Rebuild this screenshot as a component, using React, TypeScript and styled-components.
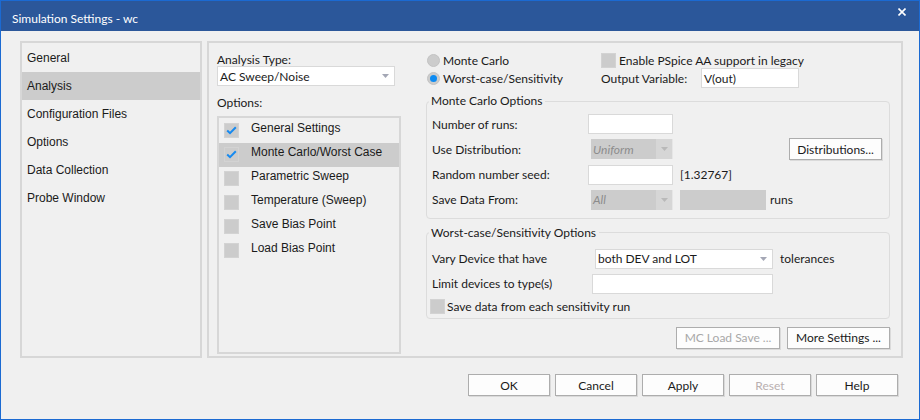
import React from 'react';
import styled, { createGlobalStyle } from 'styled-components';

const UI = `"Lato", "Noto Sans", sans-serif`;
const ARIAL = `"Liberation Sans", Arial, sans-serif`;

const Global = createGlobalStyle`
  html, body { margin: 0; padding: 0; background: #f0f0f0; }
  * { box-sizing: border-box; }
`;

const Window = styled.div`
  width: 920px;
  height: 420px;
  border: 1px solid #1b6ad2;
  background: #f0f0f0;
  display: flex;
  flex-direction: column;
  overflow: hidden;
  font-family: ${UI};
  font-size: 12px;
  color: #1a1a1a;
`;

const TitleBar = styled.div`
  height: 30px;
  flex: none;
  background: #2b579a;
  color: #fff;
  display: flex;
  align-items: flex-start;
  justify-content: space-between;
  padding: 0 13px 0 11px;
`;

const TitleText = styled.div`
  margin-top: 11px;
  line-height: 14px;
  font-size: 12px;
`;

const CloseBtn = styled.div`
  margin-top: 7px;
  width: 8px;
  height: 8px;
  display: flex;
`;

const Body = styled.div`
  flex: 1;
  display: flex;
  flex-direction: column;
  padding: 10px 16px 0 19px;
`;

const Panels = styled.div`
  display: flex;
  gap: 5px;
  height: 317px;
  flex: none;
`;

const Nav = styled.div`
  width: 182px;
  flex: none;
  border: 2px solid #d7d7d7;
  padding-top: 1px;
  display: flex;
  flex-direction: column;
`;

const NavItem = styled.div<{ $active?: boolean }>`
  height: 28px;
  display: flex;
  align-items: center;
  padding-left: 5px;
  font-family: ${ARIAL};
  font-size: 12px;
  color: #1a1a1a;
  background: ${(p) => (p.$active ? '#cccccc' : 'transparent')};
`;

const Main = styled.div`
  flex: 1;
  border: 2px solid #d7d7d7;
  display: flex;
  gap: 25px;
  padding: 9px 11px 2px 8px;
`;

const LeftCol = styled.div`
  width: 184px;
  flex: none;
  display: flex;
  flex-direction: column;
`;

const SmallLabel = styled.div<{ $mt: number }>`
  margin-top: ${(p) => p.$mt}px;
  height: 12px;
  line-height: 12px;
  white-space: nowrap;
`;

const Combo = styled.div<{ $w: number; $ml?: number }>`
  width: ${(p) => p.$w}px;
  margin-left: ${(p) => p.$ml ?? 0}px;
  height: 20px;
  background: #fff;
  border: 1px solid #d9d9d9;
  display: flex;
  align-items: center;
  justify-content: space-between;
  padding: 0 5px 0 2px;
  white-space: nowrap;
`;

const DisabledCombo = styled.div`
  width: 82px;
  margin-left: 3px;
  height: 20px;
  background: #cccccc;
  display: flex;
  align-items: center;
  justify-content: space-between;
  font-style: italic;
  color: #8c8c8c;
  padding-left: 2px;
`;

const DisabledArrowZone = styled.div`
  width: 17px;
  height: 100%;
  display: flex;
  align-items: center;
  justify-content: center;
  background: #d6d6d6;
  border-right: 1px solid #e6e6e6;
`;

const ListBox = styled.div`
  margin-top: 7px;
  flex: 1;
  border: 2px solid #d7d7d7;
  padding-top: 1px;
  display: flex;
  flex-direction: column;
`;

const ListRow = styled.div<{ $active?: boolean }>`
  height: 24px;
  display: flex;
  align-items: flex-start;
  gap: 12px;
  padding: 2px 0 0 5px;
  background: ${(p) => (p.$active ? '#cccccc' : 'transparent')};
  font-family: ${ARIAL};
  font-size: 12px;
  line-height: 14px;
`;

const CheckBox = styled.span<{ $mt?: number; $ml?: number }>`
  width: 15px;
  height: 15px;
  flex: none;
  margin-top: ${(p) => p.$mt ?? 0}px;
  margin-left: ${(p) => p.$ml ?? 0}px;
  background: #cccccc;
  border: 1px solid #d3d3d3;
  display: flex;
  align-items: center;
  justify-content: center;
`;

const RightCol = styled.div`
  flex: 1;
  display: flex;
  flex-direction: column;
`;

const TopGrid = styled.div`
  display: grid;
  grid-template-columns: 175px 1fr;
  grid-template-rows: 16px 20px;
  align-items: center;
`;

const RadioItem = styled.div`
  display: flex;
  align-items: center;
  gap: 3px;
  padding-left: 1px;
  white-space: nowrap;
`;

const Radio = styled.span<{ $checked?: boolean }>`
  width: 13px;
  height: 13px;
  border-radius: 50%;
  background: #cccccc;
  border: 1px solid #c3c3c3;
  display: flex;
  align-items: center;
  justify-content: center;
  &::after {
    content: '';
    width: 7px;
    height: 7px;
    border-radius: 50%;
    background: #0d8bf2;
    display: ${(p) => (p.$checked ? 'block' : 'none')};
  }
`;

const CheckItem = styled.div<{ $gap: number }>`
  display: flex;
  align-items: center;
  gap: ${(p) => p.$gap}px;
  white-space: nowrap;
`;

const OutputRow = styled.div`
  display: flex;
  align-items: center;
  height: 20px;
`;

const OutputLabel = styled.div`
  width: 100px;
`;

const Field = styled.div<{ $w: number; $ml?: number }>`
  width: ${(p) => p.$w}px;
  margin-left: ${(p) => p.$ml ?? 0}px;
  height: 20px;
  background: #fff;
  border: 1px solid #d9d9d9;
  display: flex;
  align-items: center;
  padding-left: 2px;
`;

const GrayField = styled.div`
  width: 86px;
  height: 20px;
  background: #cccccc;
`;

const Group = styled.fieldset<{ $mt: number; $pt: number; $pb: number }>`
  margin: ${(p) => p.$mt}px 0 0 0;
  border: 1px solid #dcdcdc;
  border-radius: 4px;
  padding: ${(p) => p.$pt}px 7px ${(p) => p.$pb}px 5px;
  min-width: 0;
`;

const Legend = styled.legend`
  padding: 0 3px 0 2px;
  margin-left: -3px;
  line-height: 14px;
  font-size: 12px;
`;

const MCGrid = styled.div`
  display: grid;
  grid-template-columns: 156px 85px 1fr;
  grid-auto-rows: 20px;
  row-gap: 5.33px;
  align-items: center;
`;

const WCGrid = styled.div`
  display: grid;
  grid-template-columns: 160px 181px 1fr;
  grid-template-rows: 20px 20px 15px;
  row-gap: 5px;
  align-items: center;
`;

const Extra = styled.div<{ $justify?: string; $gap?: number }>`
  display: flex;
  align-items: center;
  justify-content: ${(p) => p.$justify ?? 'flex-start'};
  gap: ${(p) => p.$gap ?? 4}px;
  padding-left: 7px;
  white-space: nowrap;
`;

const FullRow = styled.div`
  grid-column: 1 / -1;
  display: flex;
  align-items: center;
  gap: 2px;
  white-space: nowrap;
`;

const Btn = styled.button<{ $w: number; $off?: boolean; $dim?: string }>`
  width: ${(p) => p.$w}px;
  height: 22px;
  flex: none;
  background: #fdfdfd;
  border: 1px solid #adadad;
  box-shadow: 1px 1px 0 #dadada;
  font-family: ${UI};
  font-size: 12px;
  color: ${(p) => (p.$off ? p.$dim ?? '#a8a8a8' : '#1a1a1a')};
  padding: 0;
  border-radius: 0;
`;

const RightButtons = styled.div`
  margin-top: 8px;
  display: flex;
  justify-content: flex-end;
  gap: 7px;
`;

const DialogButtons = styled.div`
  margin-top: 16px;
  display: flex;
  justify-content: flex-end;
  gap: 5px;
  padding-right: 5px;
`;

const Arrow = ({ color = '#a4a7b5' }: { color?: string }) => (
  <svg width="7" height="4" viewBox="0 0 7 4">
    <polygon points="0,0 7,0 3.5,4" fill={color} />
  </svg>
);

const Check = () => (
  <svg width="11" height="9" viewBox="0 0 11 9">
    <polyline points="1.2,4.6 4,7.2 9.8,1.2" fill="none" stroke="#168af0" strokeWidth="2" />
  </svg>
);

const navItems = ['General', 'Analysis', 'Configuration Files', 'Options', 'Data Collection', 'Probe Window'];
const options = [
  { label: 'General Settings', checked: true },
  { label: 'Monte Carlo/Worst Case', checked: true, active: true },
  { label: 'Parametric Sweep' },
  { label: 'Temperature (Sweep)' },
  { label: 'Save Bias Point' },
  { label: 'Load Bias Point' },
];

export default function App() {
  return (
    <>
      <Global />
      <Window>
        <TitleBar>
          <TitleText>Simulation Settings - wc</TitleText>
          <CloseBtn>
            <svg width="8" height="8" viewBox="0 0 8 8">
              <path d="M0.5 0.5 L7.5 7.5 M7.5 0.5 L0.5 7.5" stroke="#fff" strokeWidth="1.6" />
            </svg>
          </CloseBtn>
        </TitleBar>
        <Body>
          <Panels>
            <Nav>
              {navItems.map((n) => (
                <NavItem key={n} $active={n === 'Analysis'}>
                  {n}
                </NavItem>
              ))}
            </Nav>
            <Main>
              <LeftCol>
                <SmallLabel $mt={2}>Analysis Type:</SmallLabel>
                <Combo $w={178}>
                  <span>AC Sweep/Noise</span>
                  <Arrow />
                </Combo>
                <SmallLabel $mt={11}>Options:</SmallLabel>
                <ListBox>
                  {options.map((o) => (
                    <ListRow key={o.label} $active={o.active}>
                      <CheckBox $mt={2}>{o.checked && <Check />}</CheckBox>
                      <span>{o.label}</span>
                    </ListRow>
                  ))}
                </ListBox>
              </LeftCol>
              <RightCol>
                <TopGrid>
                  <RadioItem>
                    <Radio />
                    <span>Monte Carlo</span>
                  </RadioItem>
                  <CheckItem $gap={3}>
                    <CheckBox />
                    <span>Enable PSpice AA support in legacy</span>
                  </CheckItem>
                  <RadioItem>
                    <Radio $checked />
                    <span>Worst-case/Sensitivity</span>
                  </RadioItem>
                  <OutputRow>
                    <OutputLabel>Output Variable:</OutputLabel>
                    <Field $w={98}>V(out)</Field>
                  </OutputRow>
                </TopGrid>
                <Group $mt={6} $pt={6} $pb={8}>
                  <Legend>Monte Carlo Options</Legend>
                  <MCGrid>
                    <span>Number of runs:</span>
                    <Field $w={85} />
                    <span />
                    <span>Use Distribution:</span>
                    <DisabledCombo>
                      <span>Uniform</span>
                      <DisabledArrowZone>
                        <Arrow color="#b9b9b9" />
                      </DisabledArrowZone>
                    </DisabledCombo>
                    <Extra $justify="flex-end">
                      <Btn $w={93}>Distributions...</Btn>
                    </Extra>
                    <span>Random number seed:</span>
                    <Field $w={85} />
                    <Extra>[1.32767]</Extra>
                    <span>Save Data From:</span>
                    <DisabledCombo>
                      <span>All</span>
                      <DisabledArrowZone>
                        <Arrow color="#b9b9b9" />
                      </DisabledArrowZone>
                    </DisabledCombo>
                    <Extra $gap={4}>
                      <GrayField />
                      <span>runs</span>
                    </Extra>
                  </MCGrid>
                </Group>
                <Group $mt={7} $pt={9} $pb={4}>
                  <Legend>Worst-case/Sensitivity Options</Legend>
                  <WCGrid>
                    <span>Vary Device that have</span>
                    <Combo $w={178} $ml={3}>
                      <span>both DEV and LOT</span>
                      <Arrow />
                    </Combo>
                    <Extra>tolerances</Extra>
                    <span>Limit devices to type(s)</span>
                    <Field $w={181} />
                    <span />
                    <FullRow>
                      <CheckBox $ml={-2} />
                      <span>Save data from each sensitivity run</span>
                    </FullRow>
                  </WCGrid>
                </Group>
                <RightButtons>
                  <Btn $w={104} $off>
                    MC Load Save ...
                  </Btn>
                  <Btn $w={103}>More Settings ...</Btn>
                </RightButtons>
              </RightCol>
            </Main>
          </Panels>
          <DialogButtons>
            <Btn $w={82}>OK</Btn>
            <Btn $w={82}>Cancel</Btn>
            <Btn $w={82}>Apply</Btn>
            <Btn $w={82} $off $dim="#b9b0b0">
              Reset
            </Btn>
            <Btn $w={82}>Help</Btn>
          </DialogButtons>
        </Body>
      </Window>
    </>
  );
}
